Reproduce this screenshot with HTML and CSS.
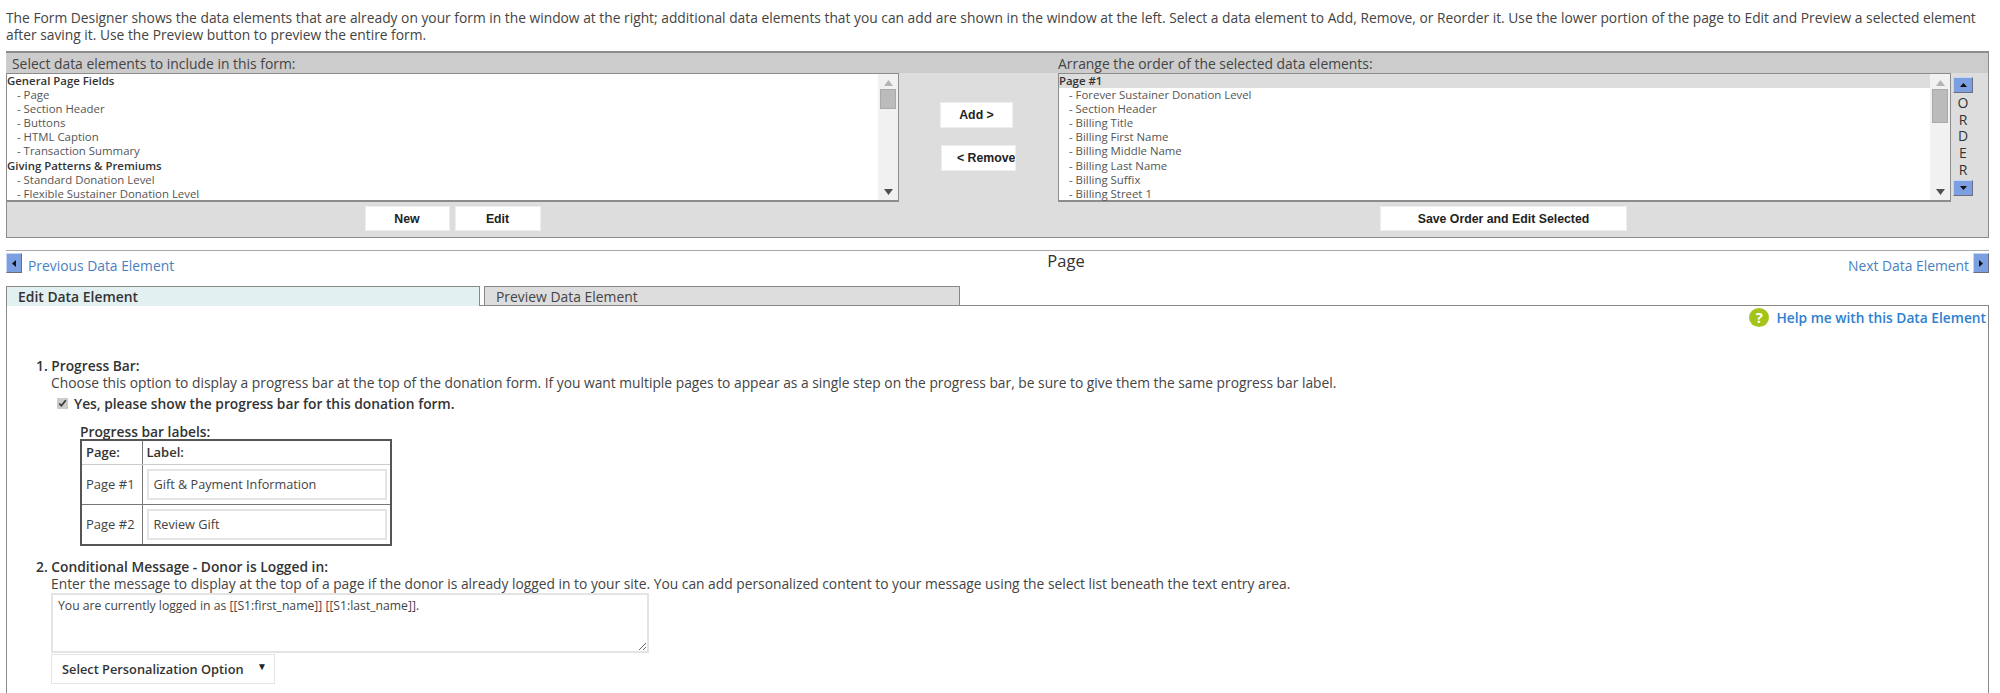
FILE: index.html
```html
<!DOCTYPE html>
<html lang="en">
<head>
<meta charset="utf-8">
<title>Form Designer</title>
<link rel="stylesheet" href="styles.css">
</head>
<body>
<div class="page">
  <p class="intro">The Form Designer shows the data elements that are already on your form in the window at the right; additional data elements that you can add are shown in the window at the left. Select a data element to Add, Remove, or Reorder it. Use the lower portion of the page to Edit and Preview a selected element after saving it. Use the Preview button to preview the entire form.</p>

  <section class="panel">
    <div class="panel-head">
      <div class="head-left">Select data elements to include in this form:</div>
      <div class="head-right">Arrange the order of the selected data elements:</div>
    </div>
    <div class="panel-body">
      <div class="list">
        <ul class="rows">
          <li class="group">General Page Fields</li>
          <li>- Page</li>
          <li>- Section Header</li>
          <li>- Buttons</li>
          <li>- HTML Caption</li>
          <li>- Transaction Summary</li>
          <li class="group">Giving Patterns &amp; Premiums</li>
          <li>- Standard Donation Level</li>
          <li>- Flexible Sustainer Donation Level</li>
        </ul>
        <div class="scroll">
          <svg class="arrow" width="9" height="6" viewBox="0 0 9 6"><path d="M4.5 0L9 6H0z" fill="#b4b4b4"/></svg>
          <div class="thumb thumb-short"></div>
          <svg class="arrow arrow-end" width="9" height="6" viewBox="0 0 9 6"><path d="M0 0H9L4.5 6z" fill="#505050"/></svg>
        </div>
      </div>
      <div class="middle">
        <button class="btn btn-add">Add &gt;</button>
        <button class="btn btn-remove">&lt; Remove</button>
      </div>
      <div class="list">
        <ul class="rows">
          <li class="group selected">Page #1</li>
          <li>- Forever Sustainer Donation Level</li>
          <li>- Section Header</li>
          <li>- Billing Title</li>
          <li>- Billing First Name</li>
          <li>- Billing Middle Name</li>
          <li>- Billing Last Name</li>
          <li>- Billing Suffix</li>
          <li>- Billing Street 1</li>
        </ul>
        <div class="scroll">
          <svg class="arrow" width="9" height="6" viewBox="0 0 9 6"><path d="M4.5 0L9 6H0z" fill="#b4b4b4"/></svg>
          <div class="thumb thumb-long"></div>
          <svg class="arrow arrow-end" width="9" height="6" viewBox="0 0 9 6"><path d="M0 0H9L4.5 6z" fill="#505050"/></svg>
        </div>
      </div>
      <div class="order">
        <button class="mini mini-v" aria-label="Move up"><svg width="7" height="4" viewBox="0 0 7 4"><path d="M3.5 0L7 4H0z" fill="#111"/></svg></button>
        <div class="order-text"><span>O</span><span>R</span><span>D</span><span>E</span><span>R</span></div>
        <button class="mini mini-v" aria-label="Move down"><svg width="7" height="4" viewBox="0 0 7 4"><path d="M0 0H7L3.5 4z" fill="#111"/></svg></button>
      </div>
    </div>
    <div class="panel-foot">
      <div class="foot-left">
        <button class="btn btn-small">New</button>
        <button class="btn btn-small">Edit</button>
      </div>
      <div class="foot-right">
        <button class="btn btn-save">Save Order and Edit Selected</button>
      </div>
    </div>
  </section>

  <nav class="pager">
    <div class="pager-side">
      <button class="mini mini-h" aria-label="Previous"><svg width="4" height="7" viewBox="0 0 4 7"><path d="M4 0V7L0 3.5z" fill="#111"/></svg></button>
      <a class="pager-link" href="#">Previous Data Element</a>
    </div>
    <div class="pager-title">Page</div>
    <div class="pager-side pager-right">
      <a class="pager-link" href="#">Next Data Element</a>
      <button class="mini mini-h" aria-label="Next"><svg width="4" height="7" viewBox="0 0 4 7"><path d="M0 0L4 3.5L0 7z" fill="#111"/></svg></button>
    </div>
  </nav>

  <div class="tabs">
    <div class="tab tab-active">Edit Data Element</div>
    <div class="tab">Preview Data Element</div>
  </div>

  <main class="content">
    <div class="help"><span class="help-icon">?</span><a class="help-link" href="#">Help me with this Data Element</a></div>

    <div class="item">
      <div class="item-title">1. Progress Bar:</div>
      <div class="item-body">
        <div class="desc">Choose this option to display a progress bar at the top of the donation form. If you want multiple pages to appear as a single step on the progress bar, be sure to give them the same progress bar label.</div>
        <label class="check"><input type="checkbox" checked> Yes, please show the progress bar for this donation form.</label>
        <div class="table-wrap">
          <div class="table-caption">Progress bar labels:</div>
          <table class="labels">
            <tr class="head-row"><th class="col-page">Page:</th><th>Label:</th></tr>
            <tr><td class="col-page">Page #1</td><td><input class="text-input" type="text" value="Gift &amp; Payment Information"></td></tr>
            <tr><td class="col-page">Page #2</td><td><input class="text-input" type="text" value="Review Gift"></td></tr>
          </table>
        </div>
      </div>
    </div>

    <div class="item item-second">
      <div class="item-title">2. Conditional Message - Donor is Logged in:</div>
      <div class="item-body">
        <div class="desc">Enter the message to display at the top of a page if the donor is already logged in to your site. You can add personalized content to your message using the select list beneath the text entry area.</div>
        <textarea class="message">You are currently logged in as [[S1:first_name]] [[S1:last_name]].</textarea>
        <div class="select-wrap">
          <select class="person"><option>Select Personalization Option</option></select>
          <span class="select-arrow">▼</span>
        </div>
      </div>
    </div>
  </main>
</div>
</body>
</html>
```
FILE: styles.css
```css
* { box-sizing: border-box; }
html, body { margin: 0; height: 693px; overflow: hidden; background: #fff; }
body { font-family: "Open Sans", sans-serif; font-size: 14px; color: #444; }

.page { display: flex; flex-direction: column; height: 693px; width: 1989px; padding-left: 6px; }

.intro { margin: 0; height: 51px; padding-top: 9px; font-size: 13.8px; line-height: 17px; color: #444; }

.panel { height: 187px; border: 1px solid #8c8c8c; border-top-width: 2px; border-left: 0; background: #ddd; display: flex; flex-direction: column; box-shadow: inset 1px 0 0 #8c8c8c; }
.panel-head { height: 20px; flex: none; background: #ccc; display: flex; font-size: 13.9px; line-height: 21px; color: #444; }
.head-left { width: 1052px; padding-left: 6px; }

.panel-body { display: flex; height: 129px; flex: none; }
.list { width: 893px; height: 129px; background: #fff; border: 1px solid #8c8c8c; border-bottom-width: 2px; display: flex; }
.rows { list-style: none; margin: 0; padding: 0; flex: 1; font-size: 11.4px; line-height: 14.1px; color: #555; }
.rows li { padding-left: 10px; height: 14.1px; }
.rows .group { padding-left: 0; font-weight: 600; color: #333; }
.rows .selected { background: #ddd; }

.scroll { width: 20px; flex: none; background: #f1f1f1; display: flex; flex-direction: column; align-items: center; padding: 6px 0 5px; }
.thumb { width: 16px; margin-top: 3px; background: #bbb; border: 1px solid #aaa; }
.thumb-short { height: 20px; }
.thumb-long { height: 34px; }
.arrow { flex: none; display: block; }
.arrow-end { margin-top: auto; }

.middle { width: 159px; display: flex; flex-direction: column; align-items: flex-start; padding-top: 29px; }

.btn { background: #fff; border: 1px solid #eee; padding: 0; font-family: "Liberation Sans", sans-serif; font-weight: 700; font-size: 12.3px; color: #222; white-space: nowrap; }
.btn-add { width: 73px; height: 26px; margin-left: 41px; }
.btn-remove { width: 75px; height: 26px; margin-left: 42px; margin-top: 17px; text-align: left; padding-left: 15px; overflow: hidden; }
.btn-small { width: 85px; height: 25px; }
.btn-small + .btn-small { margin-left: 5px; width: 86px; }
.btn-save { width: 247px; height: 25px; }

.order { width: 37px; display: flex; flex-direction: column; padding: 4px 0 0 2px; align-items: flex-start; }
.mini { background: #7b9fe0; border: 1px solid #7b9fe0; border-top-color: #c5d5f2; border-left-color: #c5d5f2; border-right-color: #6a6f80; border-bottom-color: #6a6f80; padding: 0; display: flex; align-items: center; justify-content: center; flex: none; }
.mini-v { width: 20px; height: 16px; }
.mini-h { width: 16px; height: 20px; }
.order-text { width: 20px; height: 87px; display: flex; flex-direction: column; align-items: center; padding-top: 2px; font-size: 14px; line-height: 16.7px; color: #333; }

.panel-foot { flex: 1; display: flex; padding-top: 4px; }
.foot-left { width: 893px; display: flex; justify-content: center; }
.foot-right { width: 893px; margin-left: 158px; display: flex; justify-content: center; }

.pager { height: 36px; flex: none; border-top: 1px solid #aaa; display: flex; justify-content: space-between; padding-top: 2px; margin-top: 12px; }
.pager-side { display: flex; align-items: flex-start; gap: 6px; width: 400px; }
.pager-right { justify-content: flex-end; gap: 4px; }
.pager-link { color: #4a7fc1; text-decoration: none; font-size: 13.85px; line-height: 20px; margin-top: 3px; }
.pager-title { font-size: 16.5px; line-height: 20px; color: #333; margin-left: 137px; margin-top: -2px; }

.tabs { display: flex; gap: 4px; height: 20px; flex: none; margin-bottom: -1px; position: relative; z-index: 1; }
.tab { width: 476px; height: 20px; background: #ddd; border: 1px solid #888; padding-left: 11px; font-size: 13.9px; line-height: 19px; color: #444; }
.tab-active { width: 474px; background: #e3f0f2; border-bottom: 0; color: #333; font-weight: 600; }

.content { flex: 1; border: 1px solid #888; border-bottom: 0; padding: 0 2px 0 0; min-height: 0; overflow: hidden; }

.help { display: flex; justify-content: flex-end; align-items: center; gap: 7px; height: 19px; margin-top: 2px; }
.help-icon { width: 20px; height: 19px; border-radius: 50%; background: #a5c41b; color: #fff; font-weight: 700; font-size: 15px; line-height: 19px; text-align: center; }
.help-link { color: #2e80d0; text-decoration: none; font-weight: 600; font-size: 13.75px; line-height: 19px; }

.item { padding-left: 29px; margin-top: 30px; line-height: 17px; font-size: 13.8px; }
.item-second { margin-top: 12px; }
.item-title { font-weight: 600; color: #333; }
.item-body { padding-left: 15px; }
.desc { font-size: 13.8px; font-weight: 400; color: #444; }

.check { display: flex; align-items: center; height: 17px; margin-top: 4px; margin-left: 6px; font-weight: 600; font-size: 13.8px; color: #333; gap: 6px; }
.check input { margin: 0; width: 11px; height: 11px; accent-color: #ccc; }

.table-wrap { margin-left: 29px; margin-top: 12px; }
.table-caption { line-height: 15px; font-weight: 600; color: #333; }
.labels { border-collapse: collapse; width: 312px; border: 2px solid #555; table-layout: fixed; }
.labels th, .labels td { border: 1px solid #777; padding: 0; font-size: 13px; text-align: left; color: #444; }
.labels th { font-weight: 600; height: 24px; padding-left: 4px; color: #333; border-bottom: 1px solid #ccc; }
.labels td { height: 39.5px; }
.labels .col-page { width: 61px; padding-left: 4px; }
.labels td:last-child { padding: 4px; }
.text-input { display: block; width: 240px; height: 31px; border: 2px solid #e4e4e4; padding: 0 5px; font-family: "Open Sans", sans-serif; font-size: 12.7px; color: #444; background: #fff; outline: 0; }

.message { display: block; width: 598px; height: 60px; margin-top: 1px; border: 2px solid #e4e4e4; padding: 3px 5px; font-family: "Open Sans", sans-serif; font-size: 12.2px; line-height: 16px; color: #444; }
.select-wrap { display: inline-block; position: relative; margin-top: 1px; }
.person { display: block; appearance: none; width: 224px; height: 30px; border: 1px solid #e4e4e4; background: #fff; padding: 0 10px; font-family: "Open Sans", sans-serif; font-weight: 600; font-size: 12.8px; color: #333; border-radius: 0; }
.select-arrow { position: absolute; right: 8px; top: 5px; font-size: 10px; line-height: 14px; color: #222; }
```
